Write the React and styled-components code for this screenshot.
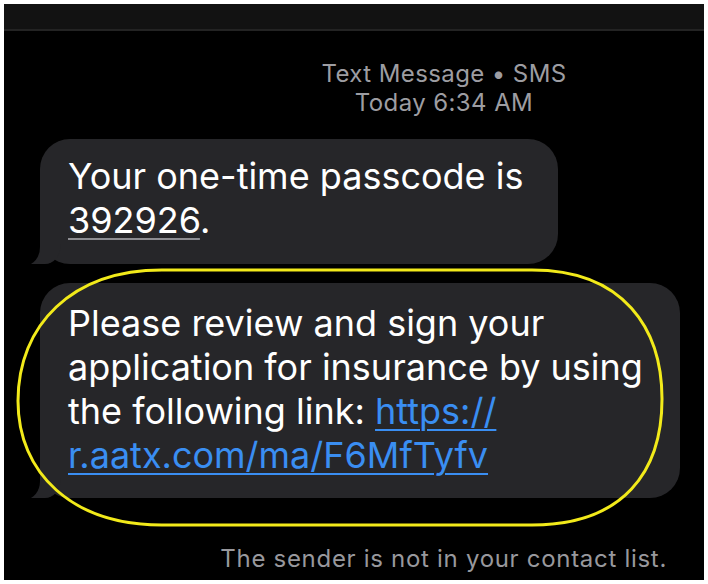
import React from "react";
import styled, { createGlobalStyle } from "styled-components";

const Global = createGlobalStyle`
  html, body { margin: 0; padding: 0; background: #ffffff; }
  body { font-family: Inter, "Noto Sans", sans-serif; }
`;

const Page = styled.div`
  width: 708px;
  height: 584px;
  box-sizing: border-box;
  padding: 4px;
  background: #ffffff;
`;

const Frame = styled.div`
  position: relative;
  width: 700px;
  height: 576px;
  background: #000000;
  display: flex;
  flex-direction: column;
  overflow: hidden;
`;

const TopBar = styled.div`
  height: 25px;
  background: #121212;
  border-bottom: 2px solid #232323;
  flex: none;
`;

const Header = styled.div`
  padding: 28px 0 0 180px;
  text-align: center;
  color: #9d9da2;
  font-size: 24px;
  line-height: 29px;
  letter-spacing: 0.4px;
`;

const Thread = styled.div`
  display: flex;
  flex-direction: column;
  align-items: flex-start;
  gap: 19px;
  padding: 22px 0 0 36px;
`;

const Bubble = styled.div`
  position: relative;
  box-sizing: border-box;
  width: ${(p) => p.$w}px;
  padding: ${(p) => p.$pad};
  background: #262629;
  border-radius: 30px;
  color: #ffffff;
  font-size: 36px;
  line-height: 44px;

  &::before {
    content: "";
    position: absolute;
    left: -9px;
    bottom: 0;
    width: 30px;
    height: 30px;
    background: #262629;
    border-bottom-right-radius: 16px 20px;
  }
  &::after {
    content: "";
    position: absolute;
    left: -26px;
    bottom: -1px;
    width: 26px;
    height: 32px;
    background: #000;
    border-bottom-right-radius: 14px 18px;
  }
`;

const Code = styled.span`
  text-decoration: underline;
  text-decoration-color: #8d8d92;
  text-decoration-thickness: 2px;
  text-underline-offset: 5px;
`;

const Link = styled.span`
  color: #3a8ef2;
  text-decoration: underline;
  text-decoration-thickness: 2px;
  text-underline-offset: 5px;
`;

const Footer = styled.div`
  margin-top: auto;
  padding: 0 37px 7px 0;
  text-align: right;
  color: #98989d;
  font-size: 24px;
  line-height: 28px;
  letter-spacing: 0.7px;
`;

const Highlight = styled.svg`
  position: absolute;
  left: 8px;
  top: 263px;
  pointer-events: none;
`;

export default function App() {
  return (
    <Page>
      <Global />
      <Frame>
        <TopBar />
        <Header>
          <div>Text Message • SMS</div>
          <div>Today 6:34 AM</div>
        </Header>
        <Thread>
          <Bubble $w={518} $pad="15px 26px 22px 28px">
            Your one-time passcode is <Code>392926</Code>.
          </Bubble>
          <Bubble $w={640} $pad="18px 26px 21px 28px">
            Please review and sign your application for insurance by using the
            following link: <Link>https://</Link>
            <br />
            <Link>r.aatx.com/ma/F6MfTyfv</Link>
          </Bubble>
        </Thread>
        <Footer>The sender is not in your contact list.</Footer>
        <Highlight width="660" height="264" viewBox="0 0 660 264">
          <path
            d="M 150 3 L 520 3 C 612 3 650 62 650 132 C 650 204 612 258 520 258 L 150 258 C 60 258 6 206 6 134 C 6 58 60 3 150 3 Z"
            fill="none"
            stroke="#f2ea1a"
            strokeWidth="3"
          />
        </Highlight>
      </Frame>
    </Page>
  );
}
